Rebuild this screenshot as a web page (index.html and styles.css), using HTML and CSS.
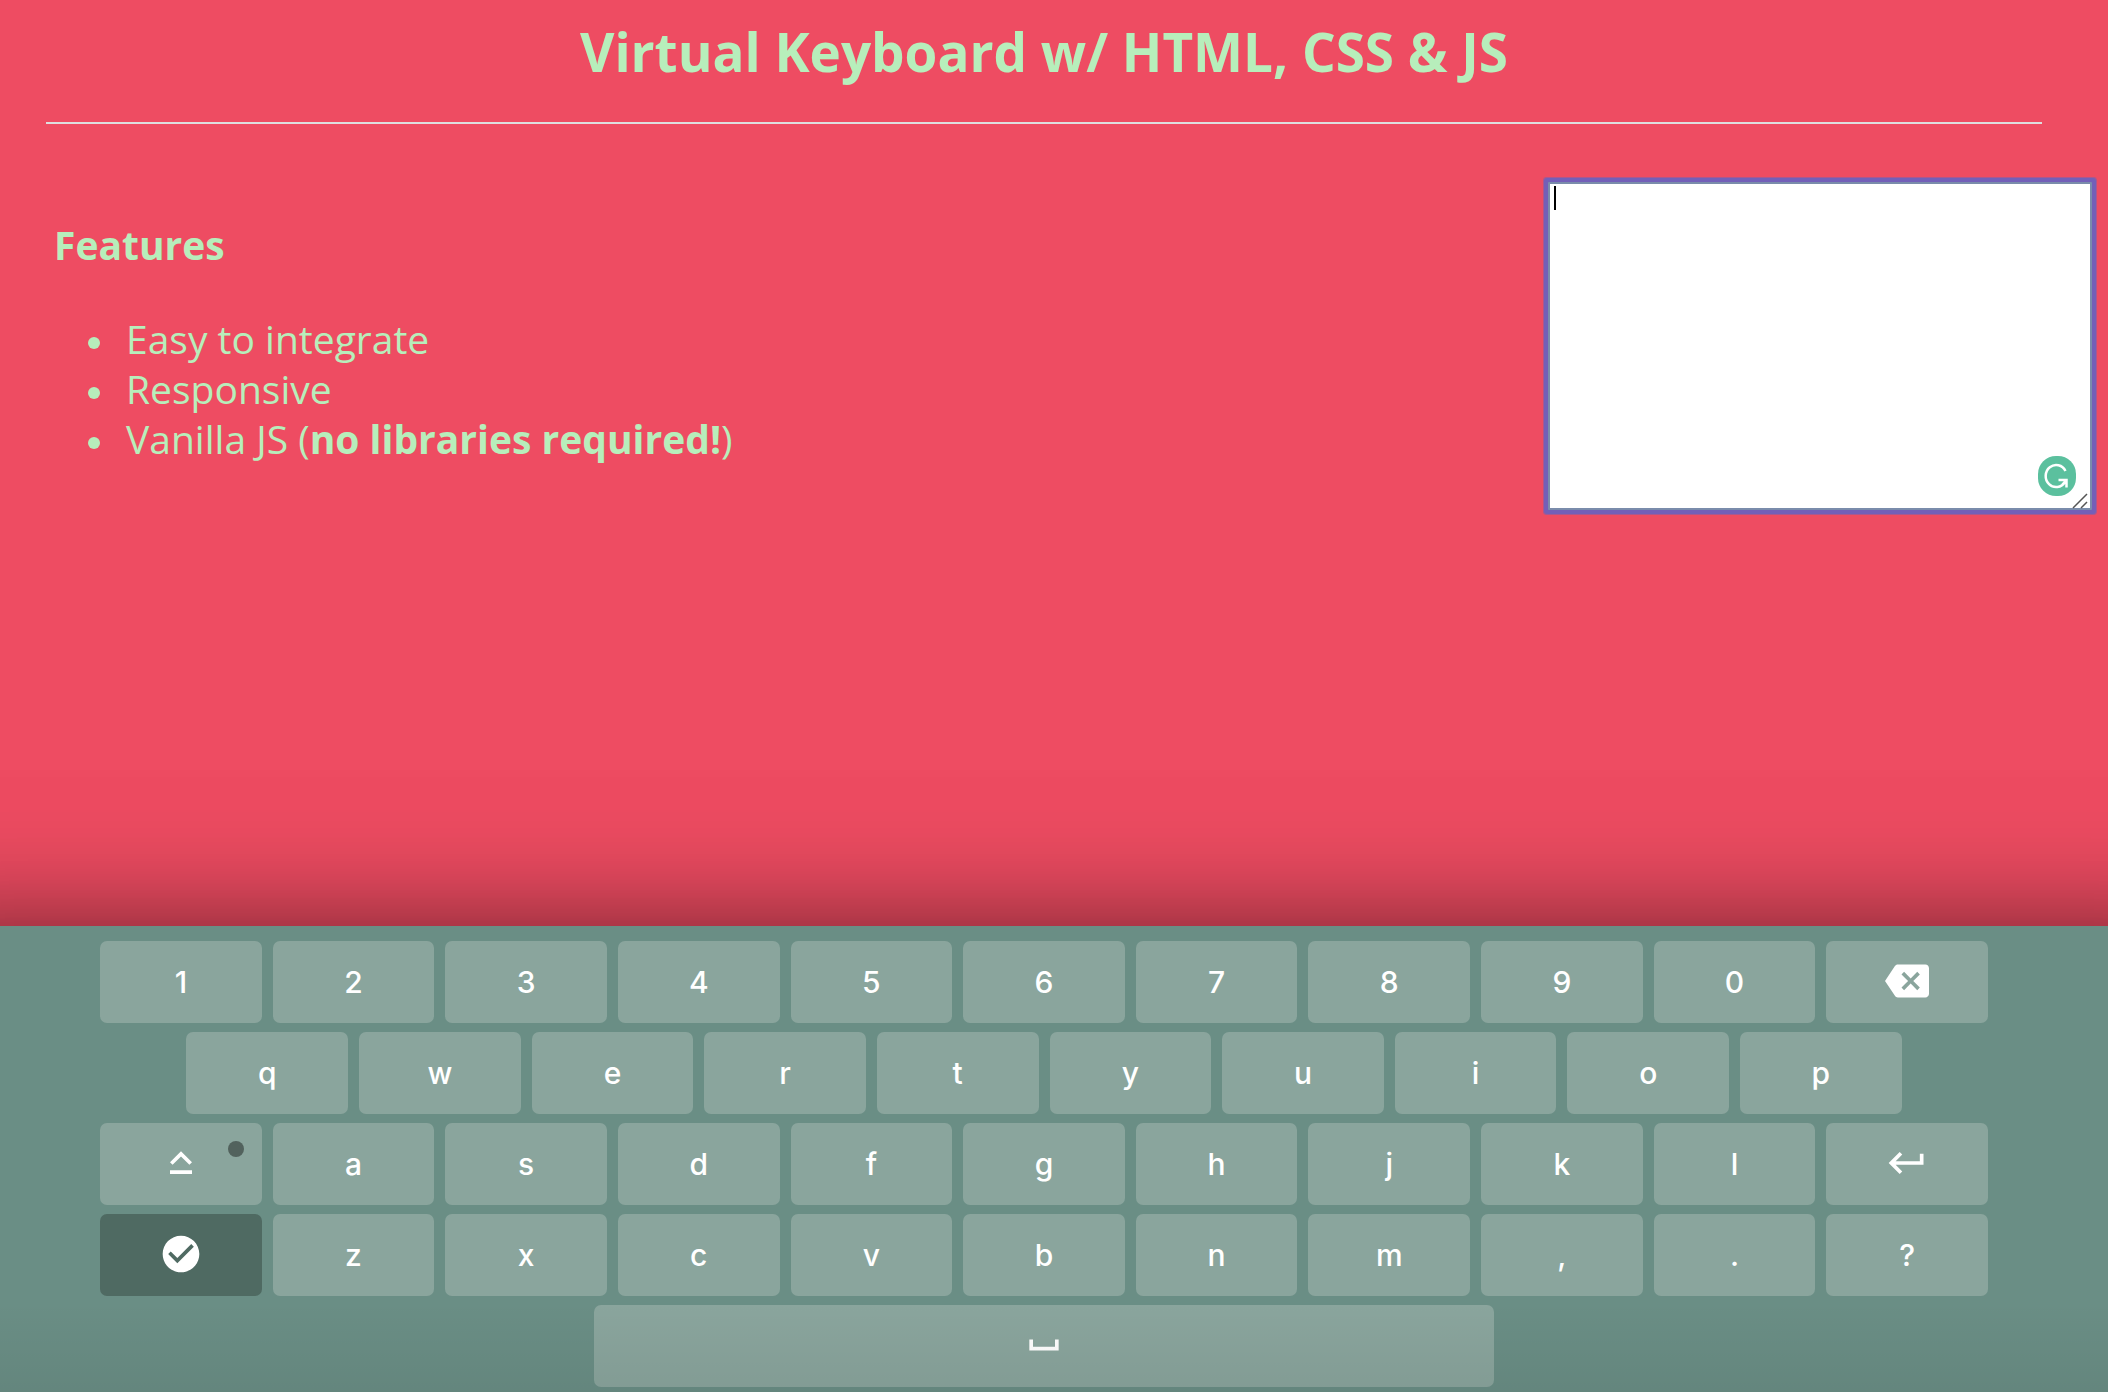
FILE: index.html
```html
<!DOCTYPE html>
<html lang="en">
<head>
  <meta charset="utf-8">
  <title>Virtual Keyboard</title>
  <link rel="stylesheet" href="styles.css">
</head>
<body>
  <header class="header">
    <h1 class="title">Virtual Keyboard w/ HTML, CSS &amp; JS</h1>
    <hr class="rule">
  </header>

  <main class="content">
    <section class="features">
      <h2 class="features-title">Features</h2>
      <ul class="features-list">
        <li>Easy to integrate</li>
        <li>Responsive</li>
        <li>Vanilla JS (<strong>no libraries required!</strong>)</li>
      </ul>
    </section>
    <div class="editor">
      <textarea class="editor-input" aria-label="Keyboard input"></textarea>
      <span class="editor-caret"></span>
      <svg class="editor-badge" viewBox="0 0 38 40" aria-hidden="true">
        <rect width="38" height="40" rx="18" fill="#5bc09e"/>
        <path d="M27.500 15A10.500 11 0 1 0 27 26M20.500 24H28.500V31.500M28 24.500l-4 4.500" fill="none" stroke="#fff" stroke-width="2.500"/>
      </svg>
      <svg class="editor-grip" viewBox="0 0 16 16" aria-hidden="true">
        <path d="M1 15L15 1M9 15l6-6" fill="none" stroke="#555" stroke-width="1.500"/>
      </svg>
    </div>
  </main>

  <div class="keyboard">
    <div class="row">
      <button class="key">1</button><button class="key">2</button><button class="key">3</button><button class="key">4</button><button class="key">5</button><button class="key">6</button><button class="key">7</button><button class="key">8</button><button class="key">9</button><button class="key">0</button>
      <button class="key" aria-label="Backspace"><svg class="icon" viewBox="0 0 24 24"><path d="M22 3H7c-.69 0-1.230.35-1.590.88L0 12l5.410 8.110c.36.53.9.89 1.590.89h15c1.100 0 2-.9 2-2V5c0-1.100-.9-2-2-2zm-3 12.590L17.590 17 14 13.410 10.410 17 9 15.590 12.590 12 9 8.410 10.410 7 14 10.590 17.590 7 19 8.410 15.410 12 19 15.590z"/></svg></button>
    </div>
    <div class="row">
      <button class="key">q</button><button class="key">w</button><button class="key">e</button><button class="key">r</button><button class="key">t</button><button class="key">y</button><button class="key">u</button><button class="key">i</button><button class="key">o</button><button class="key">p</button>
    </div>
    <div class="row">
      <button class="key key-toggle" aria-label="Caps lock"><svg class="icon" viewBox="0 0 24 24"><path d="M12 8.410L16.590 13 18 11.590l-6-6-6 6L7.410 13 12 8.410zM6 18h12v-2H6v2z"/></svg></button>
      <button class="key">a</button><button class="key">s</button><button class="key">d</button><button class="key">f</button><button class="key">g</button><button class="key">h</button><button class="key">j</button><button class="key">k</button><button class="key">l</button>
      <button class="key" aria-label="Enter"><svg class="icon" viewBox="0 0 24 24"><path d="M19 7v4H5.830l3.580-3.590L8 6l-6 6 6 6 1.410-1.410L5.830 13H21V7z"/></svg></button>
    </div>
    <div class="row">
      <button class="key key-dark" aria-label="Done"><svg class="icon" viewBox="0 0 24 24"><path d="M12 2C6.480 2 2 6.480 2 12s4.480 10 10 10 10-4.480 10-10S17.520 2 12 2zm-2 15l-5-5 1.410-1.410L10 14.170l7.590-7.590L19 8l-9 9z"/></svg></button>
      <button class="key">z</button><button class="key">x</button><button class="key">c</button><button class="key">v</button><button class="key">b</button><button class="key">n</button><button class="key">m</button><button class="key">,</button><button class="key">.</button><button class="key">?</button>
    </div>
    <div class="row">
      <button class="key key-space" aria-label="Space"><svg class="icon" viewBox="0 0 24 24"><path d="M18 9v4H6V9H4v6h16V9z"/></svg></button>
    </div>
  </div>
</body>
</html>
```
FILE: styles.css
```css
* {
  box-sizing: border-box;
}

body {
  display: flex;
  flex-direction: column;
  min-height: 100vh;
  margin: 0;
  background: #ee4c62;
  color: #b7eebb;
  font-family: "Open Sans", sans-serif;
}

.header {
  padding: 12px 66px 0 46px;
}

.title {
  margin: 0;
  font-size: 53px;
  line-height: 80px;
  text-align: center;
}

.rule {
  height: 2px;
  margin: 30px 0 0;
  border: 0;
  background: #dedede;
}

.content {
  display: flex;
  flex: 1;
  align-items: flex-start;
  justify-content: space-between;
  padding: 58px 16px 0 54px;
}

.features {
  padding-top: 38px;
  font-size: 39px;
  font-weight: 500;
  line-height: 50px;
}

.features-title {
  margin: 0;
  font-size: 39px;
  line-height: 50px;
}

.features-list {
  margin: 44px 0 0;
  padding-left: 34px;
  list-style: none;
}

.features-list li::before {
  content: "";
  display: inline-block;
  width: 12px;
  height: 12px;
  margin-right: 26px;
  border-radius: 50%;
  background: currentColor;
  vertical-align: 5px;
}

.editor {
  position: relative;
  width: 544px;
  height: 328px;
}

.editor-input {
  display: block;
  width: 100%;
  height: 100%;
  padding: 4px;
  border: 2px solid #7a8cab;
  border-radius: 1px;
  outline: none;
  background: #fff;
  font-size: 22px;
  resize: none;
  box-shadow: 0 0 0 4px #735fb8, 0 0 0 5px #a9588f;
}

.editor-caret {
  position: absolute;
  top: 4px;
  left: 6px;
  width: 2px;
  height: 24px;
  background: #000;
}

.editor-badge {
  position: absolute;
  right: 16px;
  bottom: 14px;
  width: 38px;
  height: 40px;
}

.editor-grip {
  position: absolute;
  right: 4px;
  bottom: 1px;
  width: 16px;
  height: 16px;
}

.keyboard {
  position: relative;
  display: flex;
  flex-direction: column;
  gap: 9px;
  padding: 15px 120px 5px 100px;
  background: #6a8e85;
  box-shadow:
    0 100px 100px 100px rgba(0, 0, 0, 0.5),
    0 200px 200px 200px rgba(0, 0, 0, 0.06);
}

/* Soft shade along the bottom edge of the keyboard. */
.keyboard::after {
  content: "";
  position: absolute;
  right: 0;
  bottom: 0;
  left: 0;
  height: 90px;
  background: linear-gradient(rgba(0, 0, 0, 0), rgba(0, 0, 0, 0.06));
  pointer-events: none;
}

.row {
  display: flex;
  justify-content: center;
  gap: 11px;
}

.key {
  position: relative;
  display: flex;
  flex: none;
  align-items: center;
  justify-content: center;
  width: calc((100% - 110px) / 11);
  height: 82px;
  padding: 0;
  border: 0;
  border-radius: 7px;
  background: #8aa59d;
  color: #fff;
  font-family: Inter, sans-serif;
  font-size: 30px;
  font-weight: 500;
}

.key-dark {
  background: #4f6a62;
}

.key-space {
  width: 900px;
  max-width: 100%;
}

.key-toggle::after {
  content: "";
  position: absolute;
  top: 18px;
  right: 18px;
  width: 16px;
  height: 16px;
  border-radius: 50%;
  background: #52625d;
}

.icon {
  width: 44px;
  height: 44px;
  margin-bottom: 2px;
  fill: currentColor;
}
```
